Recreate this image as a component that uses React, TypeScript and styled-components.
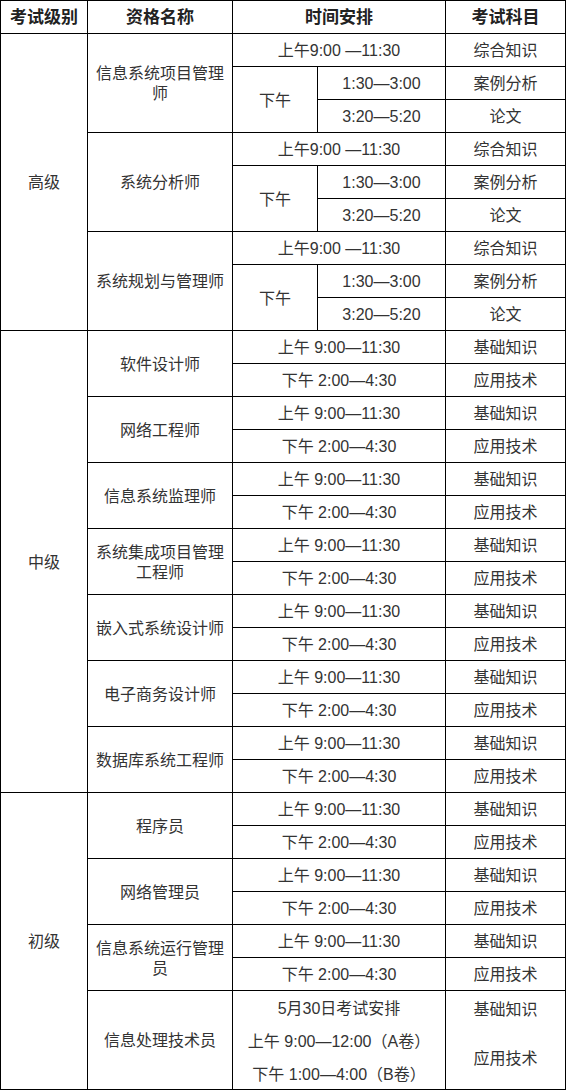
import React from "react";
import styled, { createGlobalStyle } from "styled-components";

const GlobalStyle = createGlobalStyle`
  html, body { margin: 0; padding: 0; background: #fff; }
  body { font-family: "Liberation Sans", "Noto Sans CJK SC", sans-serif; }
`;

const Table = styled.div`
  display: grid;
  grid-template-columns: 86px 144px 84px 127px 119px;
  grid-auto-rows: 32px;
  gap: 1px;
  padding: 1px;
  background: #000;
  width: 566px;
  box-sizing: border-box;
`;

type CellProps = {
  $row: number;
  $col: number;
  $rowSpan?: number;
  $colSpan?: number;
};

const Cell = styled.div<CellProps>`
  grid-row: ${(p) => p.$row} / span ${(p) => p.$rowSpan ?? 1};
  grid-column: ${(p) => p.$col} / span ${(p) => p.$colSpan ?? 1};
  background: #fff;
  color: #333;
  font-size: 16px;
  line-height: 20px;
  display: flex;
  align-items: center;
  justify-content: center;
  text-align: center;
  padding: 2px 6px 0;
  box-sizing: border-box;
  overflow: hidden;
`;

const HeadCell = styled(Cell)`
  font-size: 17px;
  font-weight: bold;
  color: #222;
  padding-top: 1px;
`;

const Stack = styled(Cell)<{ $gap: number; $align: string }>`
  flex-direction: column;
  justify-content: ${(p) => p.$align};
  gap: ${(p) => p.$gap}px;
  line-height: 33px;
`;

const Line = styled.span`
  display: block;
  white-space: nowrap;
`;

const seniors = ["信息系统项目管理师", "系统分析师", "系统规划与管理师"];

const middles = [
  "软件设计师",
  "网络工程师",
  "信息系统监理师",
  "系统集成项目管理工程师",
  "嵌入式系统设计师",
  "电子商务设计师",
  "数据库系统工程师",
];

const juniors = ["程序员", "网络管理员", "信息系统运行管理员"];

export default function App() {
  const cells: React.ReactNode[] = [];

  cells.push(
    <HeadCell key="h1" $row={1} $col={1}>考试级别</HeadCell>,
    <HeadCell key="h2" $row={1} $col={2}>资格名称</HeadCell>,
    <HeadCell key="h3" $row={1} $col={3} $colSpan={2}>时间安排</HeadCell>,
    <HeadCell key="h4" $row={1} $col={5}>考试科目</HeadCell>
  );

  cells.push(<Cell key="lv1" $row={2} $col={1} $rowSpan={9}>高级</Cell>);
  seniors.forEach((name, i) => {
    const r = 2 + i * 3;
    cells.push(
      <Cell key={`s${i}n`} $row={r} $col={2} $rowSpan={3}>{name}</Cell>,
      <Cell key={`s${i}a`} $row={r} $col={3} $colSpan={2}>上午9:00 —11:30</Cell>,
      <Cell key={`s${i}as`} $row={r} $col={5}>综合知识</Cell>,
      <Cell key={`s${i}p`} $row={r + 1} $col={3} $rowSpan={2}>下午</Cell>,
      <Cell key={`s${i}p1`} $row={r + 1} $col={4}>1:30—3:00</Cell>,
      <Cell key={`s${i}p1s`} $row={r + 1} $col={5}>案例分析</Cell>,
      <Cell key={`s${i}p2`} $row={r + 2} $col={4}>3:20—5:20</Cell>,
      <Cell key={`s${i}p2s`} $row={r + 2} $col={5}>论文</Cell>
    );
  });

  cells.push(<Cell key="lv2" $row={11} $col={1} $rowSpan={14}>中级</Cell>);
  middles.forEach((name, i) => {
    const r = 11 + i * 2;
    cells.push(
      <Cell key={`m${i}n`} $row={r} $col={2} $rowSpan={2}>{name}</Cell>,
      <Cell key={`m${i}a`} $row={r} $col={3} $colSpan={2}>上午 9:00—11:30</Cell>,
      <Cell key={`m${i}as`} $row={r} $col={5}>基础知识</Cell>,
      <Cell key={`m${i}p`} $row={r + 1} $col={3} $colSpan={2}>下午 2:00—4:30</Cell>,
      <Cell key={`m${i}ps`} $row={r + 1} $col={5}>应用技术</Cell>
    );
  });

  cells.push(<Cell key="lv3" $row={25} $col={1} $rowSpan={9}>初级</Cell>);
  juniors.forEach((name, i) => {
    const r = 25 + i * 2;
    cells.push(
      <Cell key={`j${i}n`} $row={r} $col={2} $rowSpan={2}>{name}</Cell>,
      <Cell key={`j${i}a`} $row={r} $col={3} $colSpan={2}>上午 9:00—11:30</Cell>,
      <Cell key={`j${i}as`} $row={r} $col={5}>基础知识</Cell>,
      <Cell key={`j${i}p`} $row={r + 1} $col={3} $colSpan={2}>下午 2:00—4:30</Cell>,
      <Cell key={`j${i}ps`} $row={r + 1} $col={5}>应用技术</Cell>
    );
  });

  cells.push(
    <Cell key="lastn" $row={31} $col={2} $rowSpan={3}>信息处理技术员</Cell>,
    <Stack key="lastt" $row={31} $col={3} $colSpan={2} $rowSpan={3} $gap={0} $align="center">
      <Line>5月30日考试安排</Line>
      <Line>上午 9:00—12:00（A卷）</Line>
      <Line>下午 1:00—4:00（B卷）</Line>
    </Stack>,
    <Stack key="lasts" $row={31} $col={5} $rowSpan={3} $gap={16} $align="flex-start">
      <Line>基础知识</Line>
      <Line>应用技术</Line>
    </Stack>
  );

  return (
    <>
      <GlobalStyle />
      <Table>{cells}</Table>
    </>
  );
}
